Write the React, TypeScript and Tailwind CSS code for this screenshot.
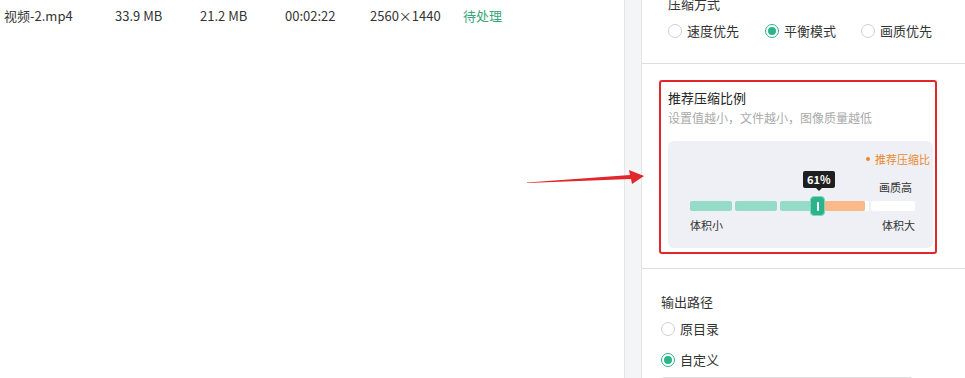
import React from 'react';

const font = "font-['Microsoft_YaHei','Noto_Sans_CJK_SC',sans-serif]";

function Radio({ label, checked }: { label: string; checked?: boolean }) {
  return (
    <label className="flex items-center gap-[5px] text-[13px] text-[#333]">
      {checked ? (
        <span className="w-[14px] h-[14px] rounded-full border border-[#2db38b] flex items-center justify-center bg-white">
          <span className="w-[8px] h-[8px] rounded-full bg-[#2db38b]" />
        </span>
      ) : (
        <span className="w-[14px] h-[14px] rounded-full border border-[#cfcfcf] bg-white" />
      )}
      <span>{label}</span>
    </label>
  );
}

export default function App() {
  const segs = ['bg-[#94dcc8]', 'bg-[#94dcc8]'];
  return (
    <div className={`relative flex h-[378px] w-[965px] overflow-hidden bg-white ${font}`}>
      {/* file list */}
      <div className="w-[624px] shrink-0">
        <div className="flex items-center h-[32px] text-[13px] text-[#333]">
          <span className="w-[115px] pl-[4px]">视频-2.mp4</span>
          <span className="w-[85px]">33.9 MB</span>
          <span className="w-[85px]">21.2 MB</span>
          <span className="w-[85px]">00:02:22</span>
          <span className="w-[93px]">2560×1440</span>
          <span className="text-[#3aa57d]">待处理</span>
        </div>
      </div>

      {/* scrollbar strip */}
      <div className="w-[17px] shrink-0 bg-[#f4f5f7] border-l border-[#e4e4e4]" />

      {/* settings panel */}
      <div className="flex-1 border-l border-[#e6e6e6] flex flex-col">
        <div className="h-[64px] shrink-0 border-b border-[#dedede] pl-[26px]">
          <div className="text-[13px] text-[#333] leading-[20px] mt-[-6px]">压缩方式</div>
          <div className="flex items-center mt-[5px] h-[24px]">
            <div className="w-[97px]"><Radio label="速度优先" /></div>
            <div className="w-[96px]"><Radio label="平衡模式" checked /></div>
            <Radio label="画质优先" />
          </div>
        </div>

        <div className="h-[205px] shrink-0 border-b border-[#dedede] pt-[16px] pl-[17px]">
          <div className="w-[278px] h-[174px] border-2 border-[#e3262b] rounded-[3px] pl-[7px] pr-[2px] pt-[6px]">
            <div className="text-[13px] text-[#222] leading-[20px]">推荐压缩比例</div>
            <div className="text-[12px] text-[#aaa] leading-[18px] mt-[1px]">设置值越小，文件越小，图像质量越低</div>
            <div className="mt-[14px] h-[107px] bg-[#eef0f5] rounded-[6px] relative">
              <div className="absolute right-[3px] top-[10px] text-[11px] text-[#e8892d] leading-[16px] flex items-center gap-[5px]">
                <span className="w-[4px] h-[4px] rounded-full bg-[#e8892d]" />
                推荐压缩比
              </div>
              <div className="absolute left-[211px] top-[38px] text-[11px] text-[#333] leading-[16px]">画质高</div>
              <div className="absolute left-[135px] top-[30px] flex flex-col items-center">
                <div className="bg-[#1f1f1f] text-white text-[11px] font-bold leading-[17px] px-[4px] rounded-[2px]">61%</div>
                <div className="w-0 h-0 border-l-[3px] border-r-[3px] border-t-[3px] border-l-transparent border-r-transparent border-t-[#1f1f1f]" />
              </div>
              <div className="absolute left-[22px] top-[60px] flex items-center h-[10px]">
                {segs.map((c, i) => (
                  <div key={i} className={`w-[42px] h-[10px] ${c} rounded-[2px] mr-[3px]`} />
                ))}
                <div className="w-[30px] h-[10px] bg-[#94dcc8] rounded-l-[2px]" />
                <div className="w-[15px] h-[20px] rounded-[4px] bg-[#2db38b] border border-[#7fd8bd] flex items-center justify-center relative z-10">
                  <span className="w-[2px] h-[9px] bg-white rounded-full" />
                </div>
                <div className="w-[40px] h-[10px] bg-[#fbb98a] rounded-r-[2px]" />
                <div className="w-[4px] h-[10px] bg-white mr-[2px]" />
                <div className="w-[44px] h-[10px] bg-white rounded-[2px]" />
              </div>
              <div className="absolute left-[22px] right-[18px] top-[76px] flex justify-between text-[11px] text-[#333] leading-[16px]">
                <span>体积小</span>
                <span>体积大</span>
              </div>
            </div>
          </div>
        </div>

        <div className="shrink-0 pl-[19px] pt-[23px]">
          <div className="text-[13px] text-[#333] leading-[20px]">输出路径</div>
          <div className="mt-[7px] h-[20px] flex items-center"><Radio label="原目录" /></div>
          <div className="mt-[11px] h-[20px] flex items-center"><Radio label="自定义" checked /></div>
          <div className="mt-[7px] w-[252px] h-[30px] border border-[#dcdcdc] rounded-[3px]" />
        </div>
      </div>

      {/* annotation arrow */}
      <svg className="absolute left-[524px] top-[166px]" width="124" height="22" viewBox="0 0 124 22">
        <polygon points="3,16.5 106,9 105,4 120,10 108,18 107,13 3,17" fill="#e3262b" />
      </svg>
    </div>
  );
}
